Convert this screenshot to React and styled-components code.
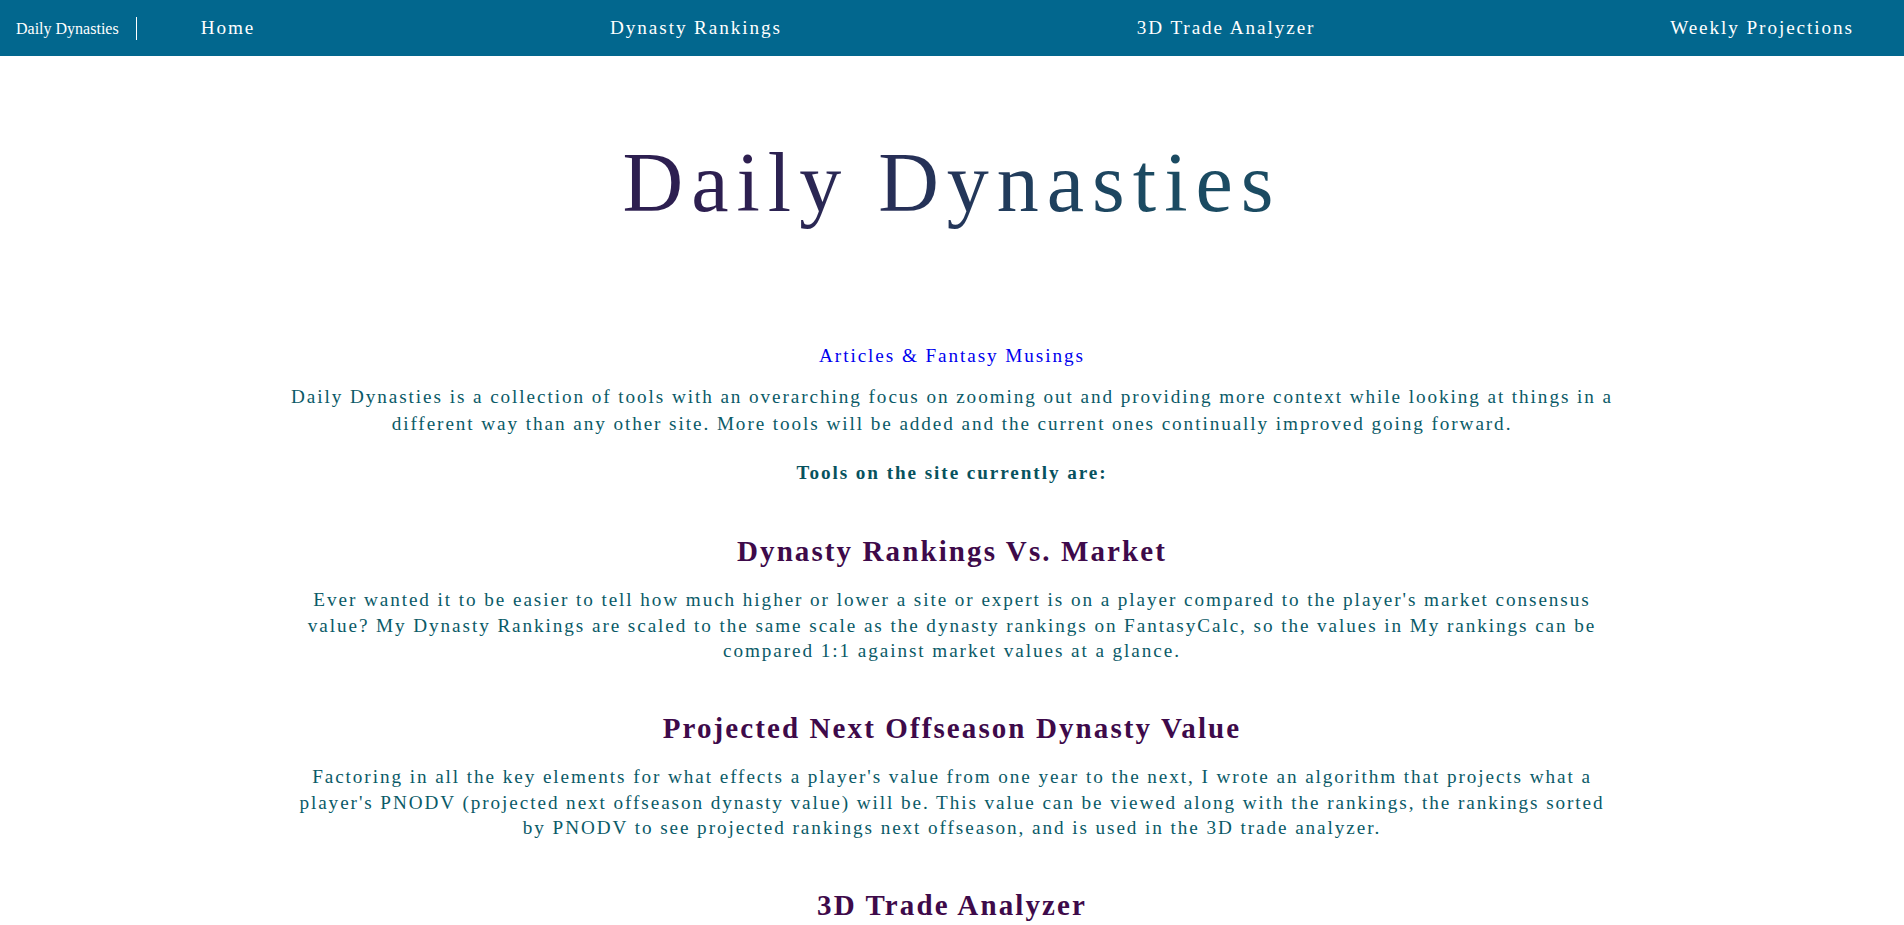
import React from "react";
import styled, { createGlobalStyle } from "styled-components";

const GlobalStyle = createGlobalStyle`
  body {
    margin: 0;
    background: #ffffff;
    font-family: "Liberation Serif", "Times New Roman", serif;
  }
`;

const NavBar = styled.nav`
  height: 56px;
  background: #02678e;
  display: flex;
  align-items: center;
  color: #ffffff;
`;

const Brand = styled.div`
  font-size: 16px;
  padding: 0 17px 0 16px;
  height: 23px;
  line-height: 23px;
  border-right: 1px solid #ffffff;
`;

const NavLinks = styled.div`
  flex: 1;
  display: flex;
  justify-content: space-between;
  padding: 0 50px 0 64px;
`;

const NavLink = styled.a`
  color: #ffffff;
  text-decoration: none;
  font-size: 19.2px;
  letter-spacing: 1.92px;
`;

const Main = styled.main`
  width: 70%;
  margin: 0 auto;
  text-align: center;
  font-size: 19.2px;
  letter-spacing: 1.92px;
  line-height: 26.88px;
  color: #0a5a67;
  padding-bottom: 40px;
`;

const Title = styled.h1`
  margin: 77px 0 0;
  font-size: 84px;
  font-weight: 400;
  line-height: 100.8px;
  letter-spacing: 8px;
  background: linear-gradient(100deg, #2d1f50 20%, #1b4b62 80%);
  -webkit-background-clip: text;
  background-clip: text;
  color: transparent;
  display: inline-block;
`;

const ArticlesLink = styled.a`
  display: block;
  margin-top: 109px;
  color: #0000ee;
  text-decoration: none;
`;

const Intro = styled.p`
  margin: ${(p) => p.$top || "14px"} 0 0;
  font-weight: ${(p) => (p.$bold ? 700 : 400)};
  color: ${(p) => (p.$bold ? "#07525e" : "inherit")};
`;

const ToolHeading = styled.h2`
  margin: 46px 0 18px;
  font-size: 29px;
  line-height: 36px;
  letter-spacing: 2.1px;
  color: #3e0a4a;
`;

const ToolText = styled.p`
  margin: 0;
  line-height: 25.6px;
`;

const tools = [
  {
    name: "Dynasty Rankings Vs. Market",
    text: "Ever wanted it to be easier to tell how much higher or lower a site or expert is on a player compared to the player's market consensus value? My Dynasty Rankings are scaled to the same scale as the dynasty rankings on FantasyCalc, so the values in My rankings can be compared 1:1 against market values at a glance.",
  },
  {
    name: "Projected Next Offseason Dynasty Value",
    text: "Factoring in all the key elements for what effects a player's value from one year to the next, I wrote an algorithm that projects what a player's PNODV (projected next offseason dynasty value) will be. This value can be viewed along with the rankings, the rankings sorted by PNODV to see projected rankings next offseason, and is used in the 3D trade analyzer.",
  },
  {
    name: "3D Trade Analyzer",
    text: "Look at trades from more than one angle. The 3D trade analyzer compares current market value, my dynasty value and projected next offseason dynasty value side by side so you can see who wins a trade now and who wins it later.",
  },
];

const App = () => {
  return (
    <>
      <GlobalStyle />
      <NavBar>
        <Brand>Daily Dynasties</Brand>
        <NavLinks>
          <NavLink href="#">Home</NavLink>
          <NavLink href="#">Dynasty Rankings</NavLink>
          <NavLink href="#">3D Trade Analyzer</NavLink>
          <NavLink href="#">Weekly Projections</NavLink>
        </NavLinks>
      </NavBar>
      <Main>
        <Title>Daily Dynasties</Title>
        <ArticlesLink href="#">Articles &amp; Fantasy Musings</ArticlesLink>
        <Intro>
          Daily Dynasties is a collection of tools with an overarching focus on
          zooming out and providing more context while looking at things in a
          different way than any other site. More tools will be added and the
          current ones continually improved going forward.
        </Intro>
        <Intro $bold $top="23px">
          Tools on the site currently are:
        </Intro>
        {tools.map((t) => (
          <section key={t.name}>
            <ToolHeading>{t.name}</ToolHeading>
            <ToolText>{t.text}</ToolText>
          </section>
        ))}
      </Main>
    </>
  );
};

export default App;
